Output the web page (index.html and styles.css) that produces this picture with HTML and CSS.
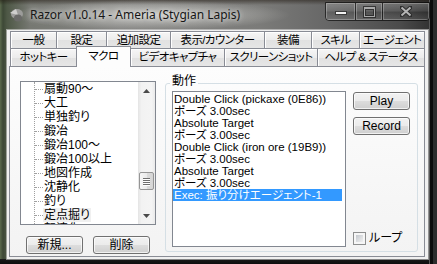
FILE: index.html
```html
<!DOCTYPE html>
<html lang="ja">
<head>
<meta charset="UTF-8">
<title>Razor v1.0.14 - Ameria (Stygian Lapis)</title>
<link rel="stylesheet" href="styles.css">
</head>
<body>
<div class="window">
  <div class="titlebar">
    <svg class="app-icon" viewBox="0 0 16 16">
      <defs><filter id="soft"><feGaussianBlur stdDeviation="0.7"/></filter></defs>
      <g filter="url(#soft)">
        <ellipse cx="9" cy="7" rx="6" ry="5" fill="#9c9c9a"/>
        <path d="M2 6 L8 2 L10 8 Z" fill="#cfcfcd"/>
        <ellipse cx="10" cy="11" rx="4" ry="3.5" fill="#6a6a68"/>
      </g>
    </svg>
    <span class="title">Razor v1.0.14 - Ameria (Stygian Lapis)</span>
    <div class="caption-buttons">
      <span class="cap-btn cap-min"><i></i></span>
      <span class="cap-btn cap-max"><i></i></span>
      <span class="cap-btn cap-close">
        <svg width="12" height="11" viewBox="0 0 12 11">
          <path d="M1.5 1.5 L10.5 9.5 M10.5 1.5 L1.5 9.5" stroke="#2e2e2e" stroke-width="4" stroke-linecap="square"/>
          <path d="M1.5 1.5 L10.5 9.5 M10.5 1.5 L1.5 9.5" stroke="#b4b4b4" stroke-width="2"/>
        </svg>
      </span>
    </div>
  </div>

  <div class="client">
    <div class="tab-row row-top">
      <span class="tab">一般</span>
      <span class="tab">設定</span>
      <span class="tab">追加設定</span>
      <span class="tab">表示/カウンター</span>
      <span class="tab">装備</span>
      <span class="tab">スキル</span>
      <span class="tab">エージェント</span>
    </div>
    <div class="tab-row row-bottom">
      <span class="tab">ホットキー</span>
      <span class="tab active">マクロ</span>
      <span class="tab">ビデオキャプチャ</span>
      <span class="tab">スクリーンショット</span>
      <span class="tab">ヘルプ &amp; ステータス</span>
    </div>

    <div class="tab-page">
      <div class="macro-list">
        <div class="tree">
          <div class="tree-view">
            <div class="tree-lines">
              <div class="node"><span>扇動90～</span></div>
              <div class="node"><span>大工</span></div>
              <div class="node"><span>単独釣り</span></div>
              <div class="node"><span>鍛冶</span></div>
              <div class="node"><span>鍛冶100～</span></div>
              <div class="node"><span>鍛冶100以上</span></div>
              <div class="node"><span>地図作成</span></div>
              <div class="node"><span>沈静化</span></div>
              <div class="node"><span>釣り</span></div>
              <div class="node selected"><span>定点掘り</span></div>
              <div class="node"><span>転清化4</span></div>
            </div>
          </div>
          <div class="vscroll">
            <div class="sb-arrow">
              <svg width="7" height="4" viewBox="0 0 7 4"><path d="M0 4 L3.5 0 L7 4 Z" fill="#4a4a4a"/></svg>
            </div>
            <div class="sb-track">
              <div class="sb-thumb"><i></i><i></i><i></i><i></i></div>
            </div>
            <div class="sb-arrow">
              <svg width="7" height="4" viewBox="0 0 7 4"><path d="M0 0 L3.5 4 L7 0 Z" fill="#4a4a4a"/></svg>
            </div>
          </div>
        </div>
        <div class="list-buttons">
          <button class="btn">新規...</button>
          <button class="btn">削除</button>
        </div>
      </div>

      <fieldset class="actions">
        <legend>動作</legend>
        <ul class="action-list">
          <li>Double Click (pickaxe (0E86))</li>
          <li>ポーズ 3.00sec</li>
          <li>Absolute Target</li>
          <li>ポーズ 3.00sec</li>
          <li>Double Click (iron ore (19B9))</li>
          <li>ポーズ 3.00sec</li>
          <li>Absolute Target</li>
          <li>ポーズ 3.00sec</li>
          <li class="selected">Exec: 振り分けエージェント-1</li>
        </ul>
        <div class="action-side">
          <button class="btn">Play</button>
          <button class="btn">Record</button>
          <label class="loop"><input type="checkbox">ループ</label>
        </div>
      </fieldset>
    </div>
  </div>
</div>
</body>
</html>
```

FILE: styles.css
```css
* {
  box-sizing: border-box;
}

body {
  margin: 0;
  width: 437px;
  height: 264px;
  overflow: hidden;
  font-family: "Liberation Sans", "Noto Sans CJK JP", sans-serif;
  font-size: 12px;
  font-feature-settings: "palt";
  color: #000;
  background: #111;
}

/* window frame */
.window {
  display: flex;
  flex-direction: column;
  width: 437px;
  height: 264px;
  background:
    linear-gradient(to right, transparent 429px, #575757 429px, #575757 430px, #0c0c0c 430px, #0c0c0c 433px, #2d2d2d 433px),
    linear-gradient(to bottom, transparent 259px, #1a1a1a 259px, #0e0e0e 264px),
    radial-gradient(140px 15px at 150px 15px, rgba(214, 214, 210, 0.85), rgba(214, 214, 210, 0)),
    linear-gradient(to bottom, rgba(30, 22, 14, 0.5) 0, rgba(30, 22, 14, 0) 5px),
    linear-gradient(to right, #5b6a4d 0, #3d4836 3px, #4e5846 7px, #767872 30px, #858583 120px, #7b7b79 260px, #666 330px, #4b4b4b 400px, #333 429px);
}

.titlebar {
  display: flex;
  align-items: flex-start;
  flex: none;
  height: 30px;
  padding: 0 7px 0 8px;
}

.app-icon {
  width: 16px;
  height: 16px;
  margin-top: 7px;
  flex: none;
}

.title {
  margin: 7px 0 0 6px;
  font-family: "Noto Sans", sans-serif;
  font-size: 12px;
  line-height: 16px;
  color: #161616;
  white-space: nowrap;
  text-shadow: 0 0 5px rgba(255, 255, 255, 0.6), 0 0 9px rgba(255, 255, 255, 0.45);
}

.caption-buttons {
  display: flex;
  margin: 2px 0 0 auto;
  height: 19px;
  border: 1px solid rgba(0, 0, 0, 0.6);
  border-radius: 0 0 4px 4px;
  overflow: hidden;
}

.cap-btn {
  display: flex;
  align-items: center;
  justify-content: center;
  background: linear-gradient(rgba(255, 255, 255, 0.22), rgba(255, 255, 255, 0.08) 45%, rgba(0, 0, 0, 0.06) 55%, rgba(255, 255, 255, 0.08));
  box-shadow: inset 0 0 0 1px rgba(255, 255, 255, 0.25);
}

.cap-min {
  width: 29px;
  align-items: flex-end;
  padding-bottom: 5px;
}

.cap-min i {
  width: 12px;
  height: 4px;
  background: #f2f2f2;
  border: 1px solid #3a3a3a;
}

.cap-max {
  width: 27px;
  border-left: 1px solid rgba(0, 0, 0, 0.6);
}

.cap-max i {
  width: 11px;
  height: 10px;
  border: 1px solid #a9a9a9;
  border-top-width: 2px;
  box-shadow: 0 0 0 1px rgba(30, 30, 30, 0.7), inset 0 0 0 1px rgba(30, 30, 30, 0.7);
}

.cap-close {
  width: 47px;
  border-left: 1px solid rgba(0, 0, 0, 0.6);
}

/* client area */
.client {
  flex: 1;
  display: flex;
  flex-direction: column;
  margin: 0 9px 5px 7px;
  padding: 1px 3px 2px 2px;
  background: #f0f0f0;
  box-shadow: 0 0 0 1px rgba(225, 225, 225, 0.55);
}

.tab-row {
  display: grid;
  margin-left: 1px;
}

.row-top {
  grid-template-columns: 47px 50px 64px 94px 47px 48px 65px;
  height: 17px;
}

.row-bottom {
  grid-template-columns: 67px 54px 94px 93px 107px;
  height: 18px;
}

.tab {
  display: flex;
  align-items: center;
  justify-content: center;
  border: 1px solid #898c95;
  border-left: none;
  border-bottom: none;
  background: linear-gradient(#f6f6f6, #ececec 50%, #e1e1e1 51%, #e6e6e6);
  box-shadow: inset 1px 1px 0 #fff;
  font-size: 11.5px;
  letter-spacing: -0.6px;
  line-height: 14px;
  white-space: nowrap;
}

.tab:first-child {
  border-left: 1px solid #898c95;
}

.row-bottom .tab {
  padding-bottom: 2px;
}

.row-bottom .tab.active {
  margin: -2px 0 -1px -1px;
  padding-bottom: 3px;
  border-left: 1px solid #898c95;
  background: #fdfdfd;
  box-shadow: none;
  z-index: 1;
}

.tab-page {
  flex: 1;
  display: flex;
  align-items: flex-start;
  padding: 14px 0 0 10px;
  border: 1px solid #898c95;
  background: linear-gradient(#fdfdfd, #f3f3f3);
}

/* macro tree */
.macro-list {
  display: flex;
  flex-direction: column;
  width: 136px;
}

.tree {
  display: flex;
  height: 144px;
  border: 1px solid #828790;
  background: #fff;
}

.tree-view {
  flex: 1;
  overflow: hidden;
}

.tree-lines {
  margin-left: 13px;
  border-left: 1px dotted #a0a0a0;
}

.node {
  display: flex;
  align-items: center;
  height: 14px;
  line-height: 14px;
  white-space: nowrap;
}

.node::before {
  content: "";
  flex: none;
  width: 8px;
  border-top: 1px dotted #a0a0a0;
}

.node span {
  padding: 0 1px;
}

.node.selected span {
  background: #f0f0f0;
}

.vscroll {
  display: flex;
  flex-direction: column;
  flex: none;
  width: 17px;
  background: linear-gradient(to right, #e4e4e4, #f2f2f2 20%, #f4f4f4 80%, #eaeaea);
}

.sb-arrow {
  display: flex;
  align-items: center;
  justify-content: center;
  height: 17px;
}

.sb-track {
  flex: 1;
}

.sb-thumb {
  display: flex;
  flex-direction: column;
  align-items: center;
  justify-content: center;
  gap: 1px;
  height: 18px;
  margin: 73px 1px 0;
  border: 1px solid #959595;
  border-radius: 2px;
  background: linear-gradient(to right, #f6f6f6, #ebebeb 50%, #dcdcdc 51%, #d5d5d5);
}

.sb-thumb i {
  width: 7px;
  height: 1px;
  background: #6e6e6e;
  box-shadow: 0 1px 0 #fff;
}

.list-buttons {
  display: flex;
  gap: 10px;
  margin: 11px 0 0 6px;
}

.btn {
  width: 57px;
  height: 18px;
  padding: 0;
  border: 1px solid #707070;
  border-radius: 3px;
  background: linear-gradient(#f2f2f2, #ebebeb 50%, #dddddd 51%, #cfcfcf);
  box-shadow: inset 0 0 0 1px rgba(255, 255, 255, 0.7);
  font: inherit;
  line-height: 16px;
  color: #000;
}

/* action group */
.actions {
  display: flex;
  gap: 7px;
  min-width: 0;
  margin: -6px 0 0 9px;
  padding: 0 7px 4px 6px;
  border: 1px solid #d5dfe5;
  border-radius: 3px;
}

.actions legend {
  margin-left: -2px;
  padding: 0 2px 4px;
  line-height: 12px;
}

.action-list {
  list-style: none;
  margin: 0;
  width: 174px;
  height: 156px;
  padding: 1px 3px 0 0;
  overflow: hidden;
  border: 1px solid #828790;
  background: #fff;
  font-size: 11.5px;
}

.action-list li {
  height: 12px;
  line-height: 12px;
  padding-left: 1px;
  white-space: nowrap;
}

.action-list li.selected {
  background: #3399ff;
  color: #fff;
}

.action-side {
  display: flex;
  flex-direction: column;
  gap: 7px;
  width: 57px;
  height: 156px;
  padding-top: 1px;
}

.loop {
  display: flex;
  align-items: center;
  gap: 3px;
  height: 13px;
  margin: auto 0 2px;
  line-height: 13px;
  white-space: nowrap;
}

.loop input {
  appearance: none;
  flex: none;
  width: 13px;
  height: 13px;
  margin: 0;
  padding: 2px;
  border: 1px solid #8e8f8f;
  background: linear-gradient(135deg, #c4c8cd, #f0f0f0) content-box, #f6f6f6;
}
```
